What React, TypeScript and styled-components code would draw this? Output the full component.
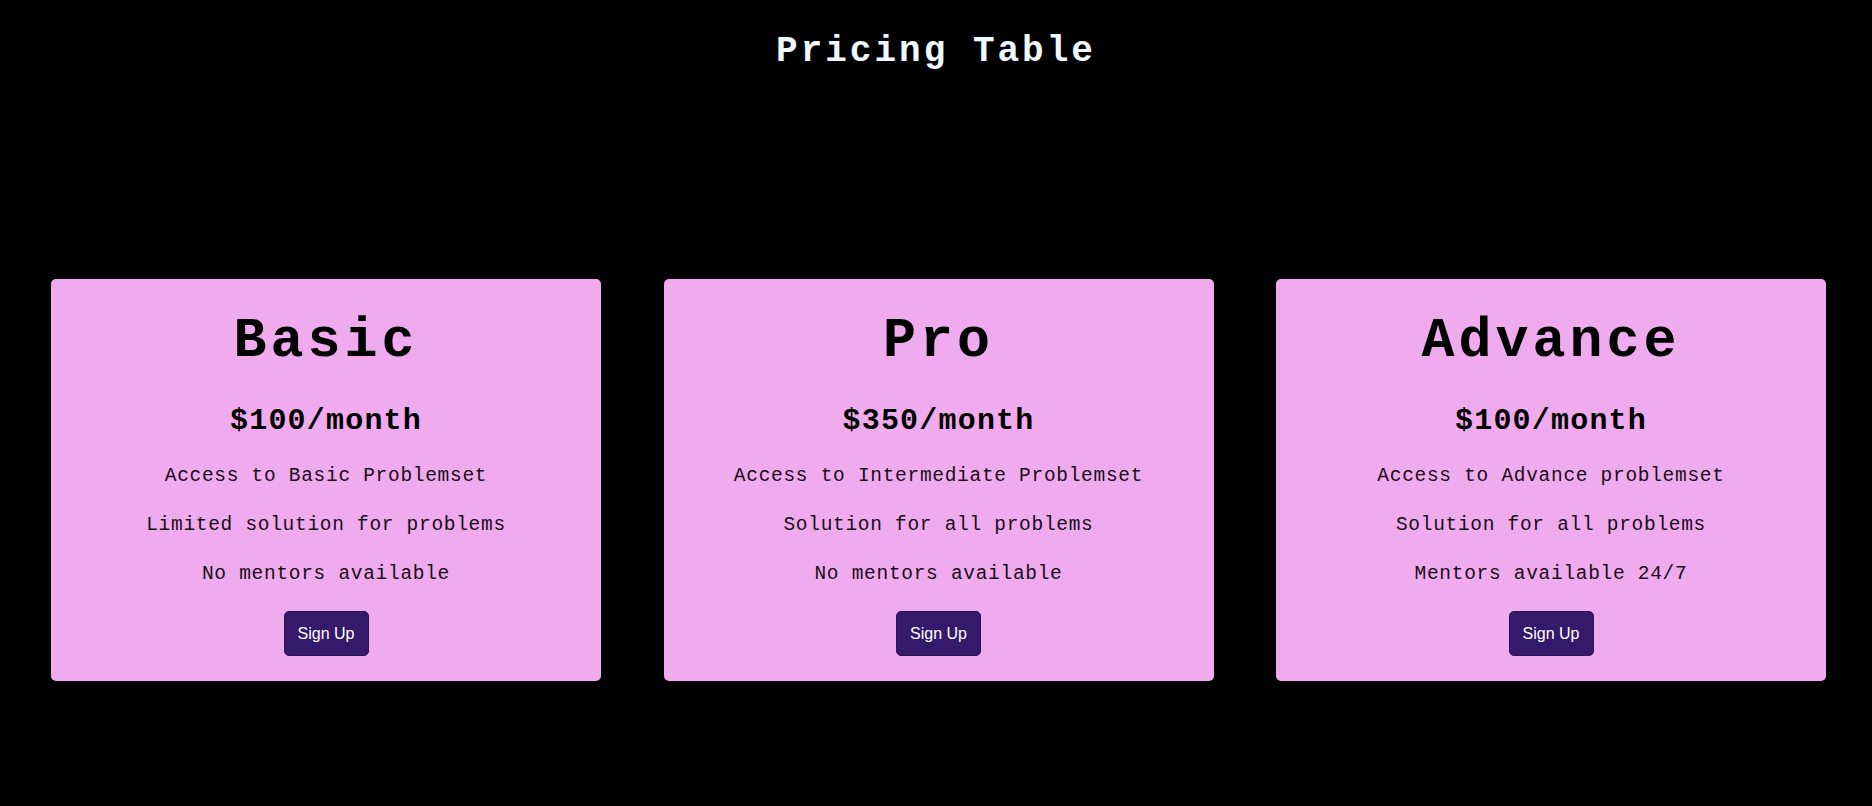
import React from "react";
import styled, { createGlobalStyle } from "styled-components";

const GlobalStyle = createGlobalStyle`
  html, body {
    margin: 0;
    padding: 0;
    background: #000;
  }
  body {
    font-family: "Liberation Mono", "DejaVu Sans Mono", monospace;
  }
`;

const Page = styled.div`
  display: flex;
  flex-direction: column;
  min-height: 806px;
  background: #000;
`;

const Title = styled.h1`
  margin: 30px 0 0;
  text-align: center;
  color: #f0f8ff;
  font-family: "Liberation Mono", monospace;
  font-weight: 700;
  font-size: 36px;
  line-height: 43px;
  letter-spacing: 3px;
`;

const Cards = styled.div`
  display: flex;
  gap: 62.5px;
  padding: 0 46px 0 51px;
  margin-top: 206px;
`;

const Card = styled.div`
  flex: 1;
  display: flex;
  flex-direction: column;
  align-items: center;
  background: #f0abee;
  border-radius: 5px;
  padding: 30px 16px 25px;
  color: #000;
`;

const PlanName = styled.h2`
  margin: 0;
  font-family: "Liberation Mono", monospace;
  font-weight: 700;
  font-size: 55px;
  line-height: 66px;
  letter-spacing: 4px;
`;

const Price = styled.h3`
  margin: 28px 0 0;
  font-family: "Liberation Mono", monospace;
  font-weight: 700;
  font-size: 30px;
  line-height: 36px;
  letter-spacing: 1.2px;
`;

const Features = styled.ul`
  list-style: none;
  margin: 25.5px 0 0;
  padding: 0;
  display: flex;
  flex-direction: column;
  align-items: center;
  gap: 25.6px;
`;

const Feature = styled.li`
  font-family: "Liberation Mono", monospace;
  font-size: 19.5px;
  line-height: 23.4px;
  letter-spacing: 0.7px;
  color: #1a0d1a;
`;

const SignUp = styled.button`
  margin-top: 25.5px;
  width: 85px;
  height: 45px;
  border: 1px solid #2a1258;
  border-radius: 5px;
  background: #35196b;
  color: #fff;
  font-family: "Liberation Sans", Arial, sans-serif;
  font-size: 16px;
  cursor: pointer;
`;

type Plan = { name: string; price: string; features: string[] };

const plans: Plan[] = [
  {
    name: "Basic",
    price: "$100/month",
    features: [
      "Access to Basic Problemset",
      "Limited solution for problems",
      "No mentors available",
    ],
  },
  {
    name: "Pro",
    price: "$350/month",
    features: [
      "Access to Intermediate Problemset",
      "Solution for all problems",
      "No mentors available",
    ],
  },
  {
    name: "Advance",
    price: "$100/month",
    features: [
      "Access to Advance problemset",
      "Solution for all problems",
      "Mentors available 24/7",
    ],
  },
];

export default function App() {
  return (
    <>
      <GlobalStyle />
      <Page>
        <Title>Pricing Table</Title>
        <Cards>
          {plans.map((p) => (
            <Card key={p.name}>
              <PlanName>{p.name}</PlanName>
              <Price>{p.price}</Price>
              <Features>
                {p.features.map((f) => (
                  <Feature key={f}>{f}</Feature>
                ))}
              </Features>
              <SignUp>Sign Up</SignUp>
            </Card>
          ))}
        </Cards>
      </Page>
    </>
  );
}
